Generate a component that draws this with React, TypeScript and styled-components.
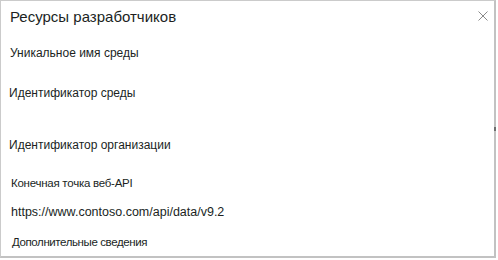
import styled, { createGlobalStyle } from 'styled-components';

const Global = createGlobalStyle`
    html, body {
        margin: 0;
        padding: 0;
        background: #ffffff;
    }
`;

const Panel = styled.div`
    box-sizing: border-box;
    width: 496px;
    height: 258px;
    border: 1px solid #cbcbcb;
    border-right: 2px solid #c2c2c2;
    border-bottom: 2px solid #c2c2c2;
    padding: 6px 6px 0 8px;
    display: flex;
    flex-direction: column;
    font-family: 'Liberation Sans', Arial, sans-serif;
    color: #201f1e;
    position: relative;
`;

const TitleBar = styled.div`
    display: flex;
    justify-content: space-between;
    align-items: flex-start;
`;

const Title = styled.h3`
    margin: 0 0 0 1px;
    font-size: 15px;
    line-height: 20px;
    font-weight: normal;
`;

const CloseButton = styled.button`
    border: none;
    background: none;
    padding: 0;
    margin: 4px 0 0 0;
    width: 10px;
    height: 10px;
    display: flex;
    cursor: pointer;
`;

const Field = styled.div<{ $indent: number; $gap: number; $size: number; $spacing?: number }>`
    margin-top: ${(p) => p.$gap}px;
    padding-left: ${(p) => p.$indent}px;
    font-size: ${(p) => p.$size}px;
    letter-spacing: ${(p) => p.$spacing ?? 0}px;
    line-height: 16px;
`;

const ScrollTick = styled.div`
    position: absolute;
    right: -2px;
    top: 126px;
    width: 2px;
    height: 4px;
    background: #6e6e6e;
`;

export default function App() {
    return (
        <>
            <Global />
            <Panel>
                <TitleBar>
                    <Title>Ресурсы разработчиков</Title>
                    <CloseButton aria-label="Закрыть">
                        <svg width="10" height="10" viewBox="0 0 10 10">
                            <path d="M0.5 0.5 L9.5 9.5 M9.5 0.5 L0.5 9.5" stroke="#8a8a8a" strokeWidth="1" />
                        </svg>
                    </CloseButton>
                </TitleBar>
                <Field $indent={1} $gap={18} $size={12}>Уникальное имя среды</Field>
                <Field $indent={0} $gap={24} $size={12}>Идентификатор среды</Field>
                <Field $indent={0} $gap={36} $size={12}>Идентификатор организации</Field>
                <Field $indent={2} $gap={22} $size={11.5} $spacing={-0.25}>Конечная точка веб-API</Field>
                <Field $indent={2} $gap={13} $size={12.5}>https://www.contoso.com/api/data/v9.2</Field>
                <Field $indent={3} $gap={14} $size={11.5} $spacing={-0.4}>Дополнительные сведения</Field>
                <ScrollTick />
            </Panel>
        </>
    );
}
